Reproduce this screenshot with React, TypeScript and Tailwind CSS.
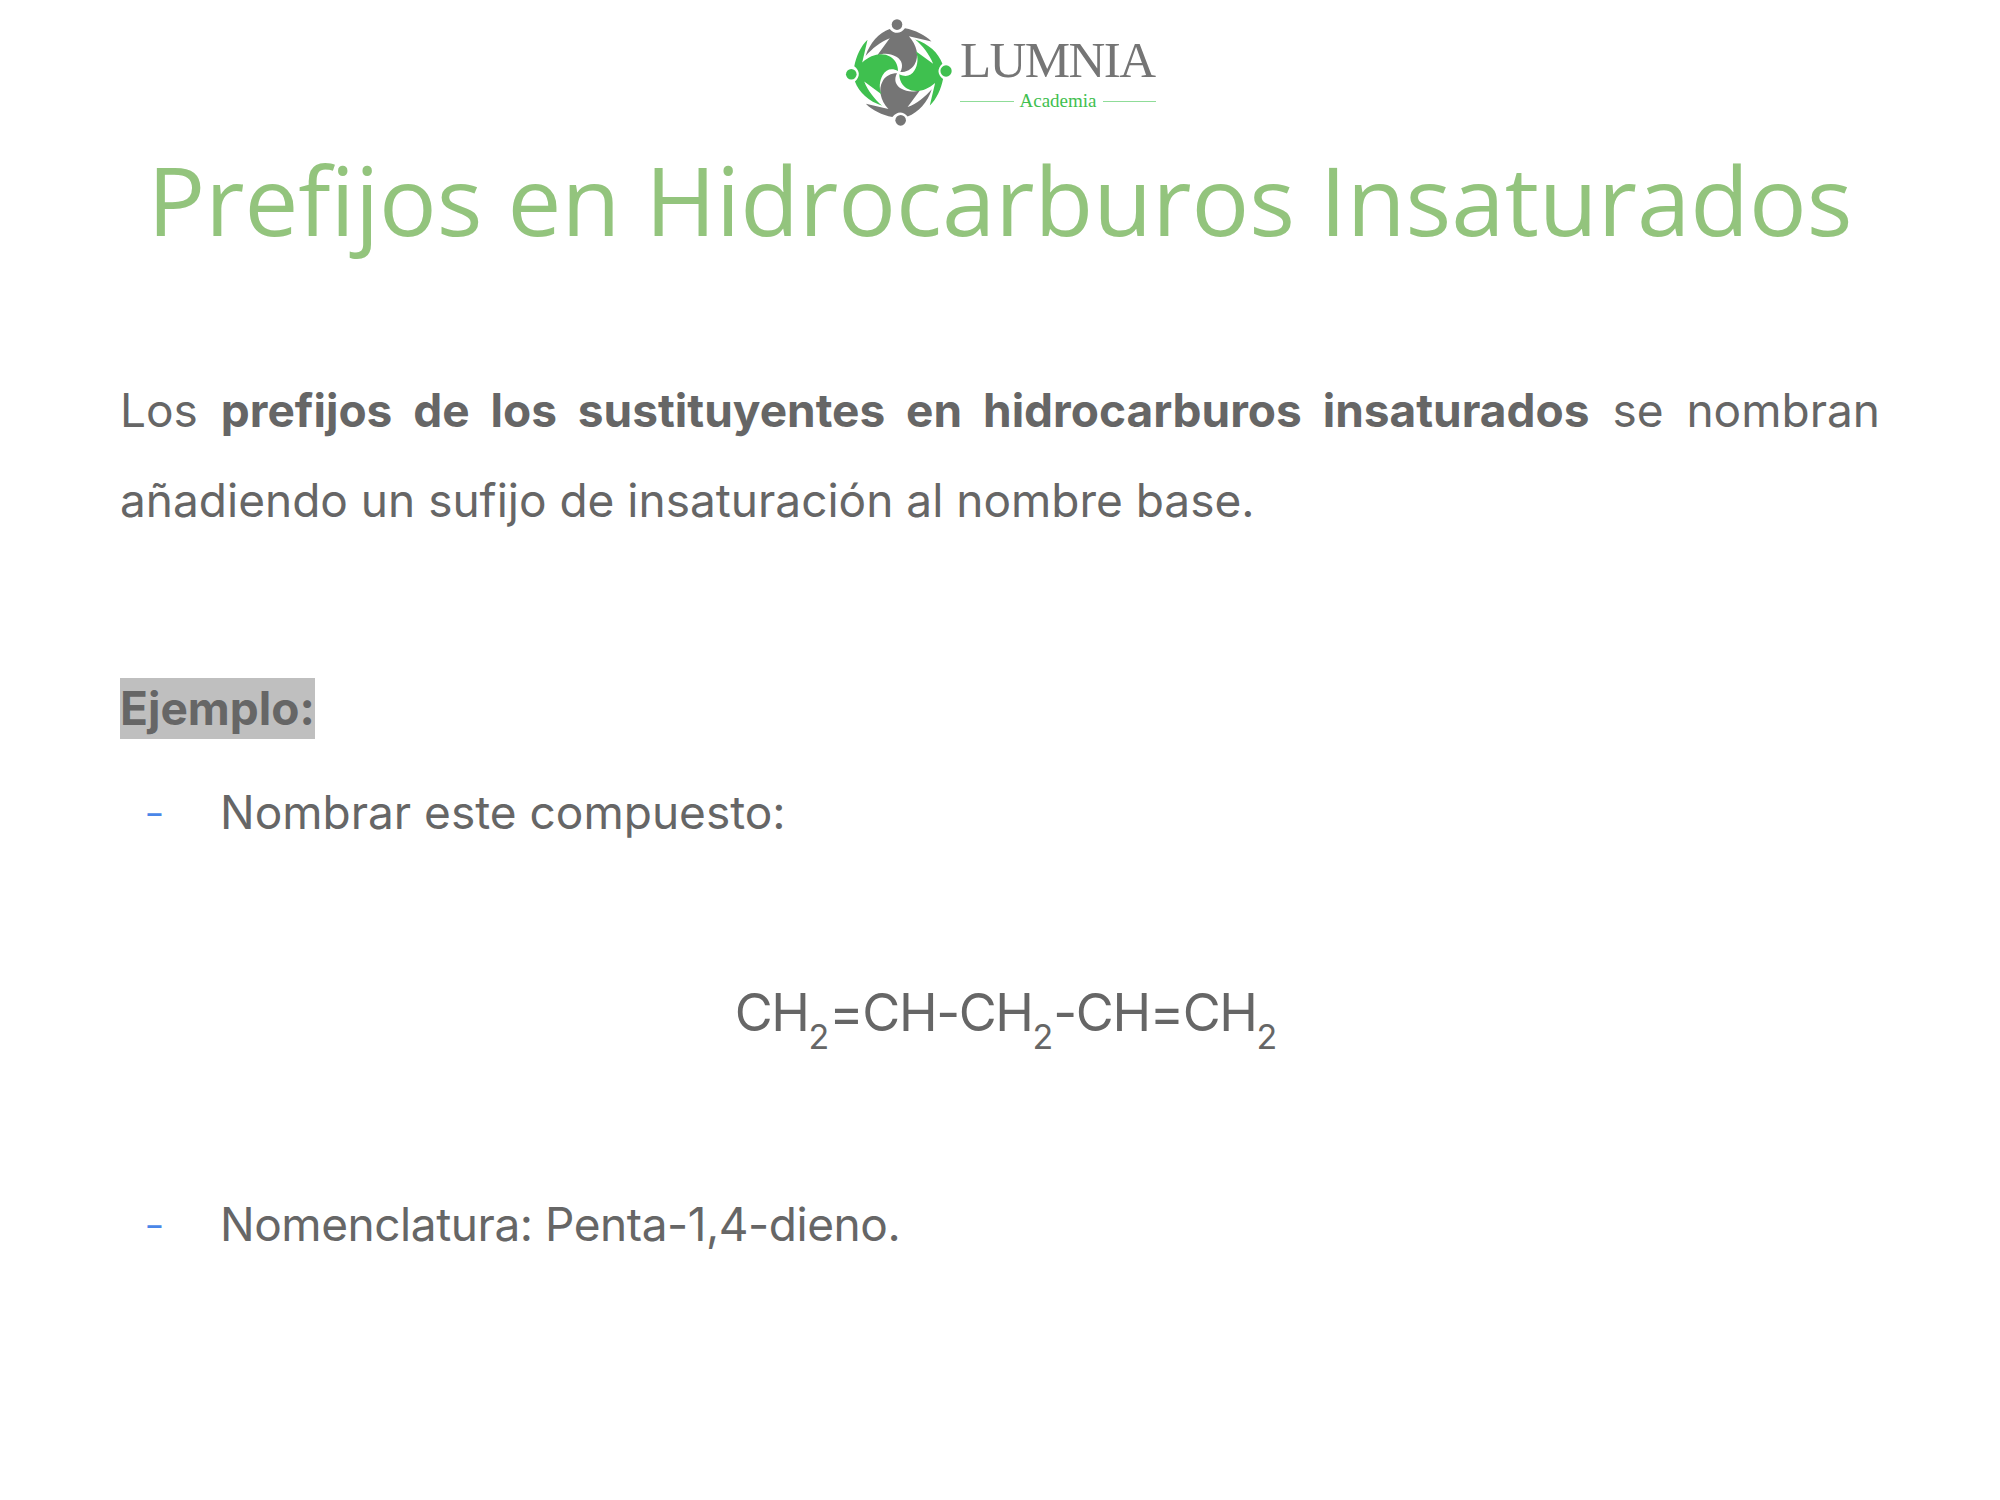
const PERSON =
  "M135 168C148 128 175 98 208 86C222 102 240 102 254 84C285 90 315 104 334 124L266 108C290 135 298 168 283 193C274 208 258 216 240 216C250 197 245 180 228 170C210 160 190 158 170 166L208 114C180 125 155 145 135 168Z";

const LumniaLogo = () => (
  <div className="flex items-center gap-[6px]">
    <svg width="110" height="110" viewBox="70 50 332 332">
      <path d={PERSON} fill="#757575" />
      <path d={PERSON} fill="#757575" transform="rotate(180 235 218)" />
      <path d={PERSON} fill="#3fc04f" transform="rotate(90 235 218)" />
      <path d={PERSON} fill="#3fc04f" transform="rotate(270 235 218)" />
      <circle cx="230" cy="73" r="16" fill="#757575" />
      <circle cx="241" cy="362" r="16" fill="#757575" />
      <circle cx="378" cy="213" r="17" fill="#3fc04f" />
      <circle cx="92" cy="223" r="16" fill="#3fc04f" />
    </svg>
    <div className="flex w-[196px] flex-col font-['Liberation_Serif',serif]">
      <span className="mt-[2px] text-[51px] leading-[50px] tracking-[-1.6px] text-[#757575]">LUMNIA</span>
      <div className="mt-[6px] flex items-center gap-[6px]">
        <div className="h-px flex-1 bg-[#8fdc98]" />
        <span className="text-[19px] leading-[20px] text-[#3fc04f]">Academia</span>
        <div className="h-px flex-1 bg-[#8fdc98]" />
      </div>
    </div>
  </div>
);

const Sub2 = () => <sub className="text-[34px] leading-none tracking-normal align-[-9px]">2</sub>;

const App = () => {
  return (
    <div className="flex h-[1500px] w-[2000px] flex-col bg-white font-['Inter',sans-serif] text-[#666666]">
      <header className="flex justify-center pt-[17px]">
        <LumniaLogo />
      </header>

      <h1 className="mt-[12px] text-center font-['Open_Sans',sans-serif] text-[96px] leading-[120px] text-[#93c47d]">
        Prefijos en Hidrocarburos Insaturados
      </h1>

      <main className="px-[120px] pt-[106px] text-[46px]">
        <p className="text-justify leading-[90px]">
          Los <b className="font-bold">prefijos de los sustituyentes en hidrocarburos insaturados</b> se nombran añadiendo un sufijo de insaturación al nombre base.
        </p>

        <div className="mt-[133px] flex">
          <span className="h-[61px] bg-[#bfbfbf] font-bold leading-[61px]">Ejemplo:</span>
        </div>

        <div className="mt-[43px] flex leading-[60px]">
          <span className="w-[100px] pl-[24px] font-light text-[#4a86e8]">-</span>
          <span>Nombrar este compuesto:</span>
        </div>

        <p className="mt-[133px] pl-[12px] text-center text-[52px] leading-[76px] tracking-[-1.4px]">
          CH<Sub2 />=CH-CH<Sub2 />-CH=CH<Sub2 />
        </p>

        <div className="mt-[143px] flex leading-[60px]">
          <span className="w-[100px] pl-[24px] font-light text-[#4a86e8]">-</span>
          <span className="tracking-[-0.45px]">Nomenclatura: Penta-1,4-dieno.</span>
        </div>
      </main>
    </div>
  );
};

export default App;
